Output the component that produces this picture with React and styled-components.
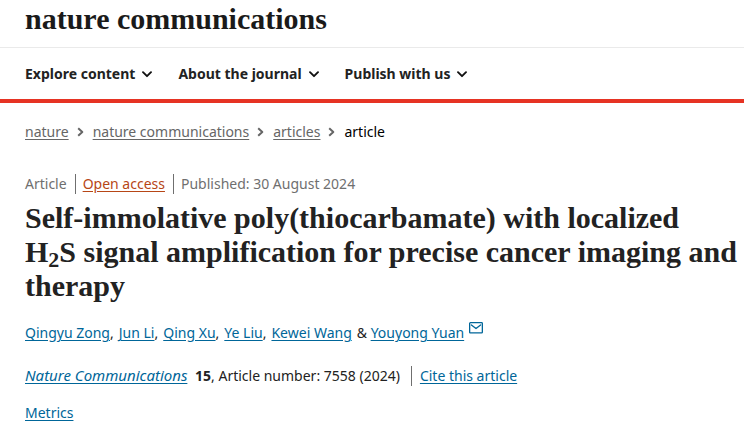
import React from "react";
import styled, { createGlobalStyle } from "styled-components";

const GlobalStyle = createGlobalStyle`
  * { box-sizing: border-box; }
  body {
    margin: 0;
    background: #fff;
    color: #222;
    font: 14px/24px "Noto Sans", "Segoe UI", sans-serif;
  }
`;

const Brand = styled.header`
  padding: 0 25px 9px;
  border-bottom: 1px solid #eaeaea;
`;

const BrandLink = styled.a`
  display: block;
  color: #1a1a1a;
  font: bold 30px/38px "Liberation Serif", serif;
  text-decoration: none;
  white-space: nowrap;
`;

const Nav = styled.nav`
  display: flex;
  gap: 26px;
  padding: 14px 25px 13px;
  border-bottom: 4px solid #e63323;
`;

const NavButton = styled.button`
  display: flex;
  align-items: center;
  gap: 7px;
  padding: 0;
  border: 0;
  background: none;
  color: #222;
  font: bold 14px/24px "Noto Sans", "Segoe UI", sans-serif;
  white-space: nowrap;
  cursor: pointer;
`;

const Page = styled.main`
  padding: 17px 4px 16px 25px;
`;

const Crumbs = styled.ol`
  display: flex;
  align-items: center;
  margin: 0 0 30px;
  padding: 0;
  list-style: none;
  color: #000;
`;

const Crumb = styled.li`
  display: flex;
  align-items: center;

  svg { margin: 0 9px 0 8px; }
`;

const CrumbLink = styled.a`
  color: #666;
  text-underline-offset: 2px;
`;

const Details = styled.ul`
  display: flex;
  align-items: center;
  margin: 0 0 7px;
  padding: 0;
  list-style: none;
  color: #6f6f6f;
`;

const Detail = styled.li`
  line-height: 20px;

  & + & {
    margin-left: 8px;
    padding-left: 7px;
    border-left: 1px solid #6f6f6f;
  }
`;

const AccessLink = styled.a`
  color: #b74616;
  text-underline-offset: 2px;
`;

const Title = styled.h1`
  margin: 0 0 18px;
  font: bold 30px/34px "Liberation Serif", serif;

  sub {
    font-size: 22px;
    line-height: 0;
    vertical-align: -5px;
  }
`;

const Authors = styled.ul`
  display: flex;
  flex-wrap: wrap;
  column-gap: 5px;
  margin: 0 0 18px;
  padding: 0;
  list-style: none;

  svg { margin-left: 5px; vertical-align: 4px; }
`;

const TextLink = styled.a`
  color: #006699;
  text-underline-offset: 2px;
`;

const Citation = styled.p`
  display: flex;
  align-items: center;
  margin: 0 0 13px;
`;

const Journal = styled.span`
  margin-right: 11px;

  i { font-size: 15px; }
  b { margin-left: 4px; }
`;

const Cite = styled.span`
  padding-left: 8px;
  border-left: 1px solid #6f6f6f;
  line-height: 20px;
`;

const ChevronDown = () => (
  <svg width="10" height="7" viewBox="0 0 10 7" fill="none" stroke="#111" strokeWidth="1.9" strokeLinecap="round" strokeLinejoin="round" aria-hidden="true">
    <path d="M1 1.2 5 5.2 9 1.2" />
  </svg>
);

const ChevronRight = () => (
  <svg width="7" height="10" viewBox="0 0 7 10" fill="none" stroke="#666" strokeWidth="2" strokeLinejoin="round" aria-hidden="true">
    <path d="M1.2 1.2 5.3 5 1.2 8.8" />
  </svg>
);

const Envelope = () => (
  <svg width="14" height="12" viewBox="0 0 14 12" fill="none" stroke="#006699" strokeWidth="1.3" strokeLinecap="round" strokeLinejoin="round" aria-hidden="true">
    <rect x="0.65" y="0.65" width="12.7" height="10.3" rx="0.8" />
    <path d="M2.4 2.9 7 6.6 11.6 2.9" />
  </svg>
);

const menus = ["Explore content", "About the journal", "Publish with us"];
const trail = ["nature", "nature communications", "articles"];
const authors = ["Qingyu Zong", "Jun Li", "Qing Xu", "Ye Liu", "Kewei Wang"];

export default function App() {
  return (
    <>
      <GlobalStyle />
      <Brand>
        <BrandLink href="#home">nature communications</BrandLink>
      </Brand>
      <Nav>
        {menus.map((label) => (
          <NavButton key={label} type="button">
            {label}
            <ChevronDown />
          </NavButton>
        ))}
      </Nav>
      <Page>
        <Crumbs>
          {trail.map((label) => (
            <Crumb key={label}>
              <CrumbLink href="#trail">{label}</CrumbLink>
              <ChevronRight />
            </Crumb>
          ))}
          <Crumb>article</Crumb>
        </Crumbs>
        <Details>
          <Detail>Article</Detail>
          <Detail><AccessLink href="#access">Open access</AccessLink></Detail>
          <Detail>Published: <time dateTime="2024-08-30">30 August 2024</time></Detail>
        </Details>
        <Title>
          Self-immolative poly(thiocarbamate) with localized
          <br />
          H<sub>2</sub>S signal amplification for precise cancer imaging and therapy
        </Title>
        <Authors>
          {authors.map((name, i) => (
            <li key={name}>
              <TextLink href="#author">{name}</TextLink>
              {i < authors.length - 1 && ","}
            </li>
          ))}
          <li>
            &amp;&nbsp;
            <TextLink href="#author">Youyong Yuan<Envelope /></TextLink>
          </li>
        </Authors>
        <Citation>
          <Journal>
            <TextLink href="#journal"><i>Nature Communications</i></TextLink>{" "}
            <b>15</b>, Article number: 7558 (2024)
          </Journal>
          <Cite><TextLink href="#cite">Cite this article</TextLink></Cite>
        </Citation>
        <TextLink href="#metrics">Metrics</TextLink>
      </Page>
    </>
  );
}
